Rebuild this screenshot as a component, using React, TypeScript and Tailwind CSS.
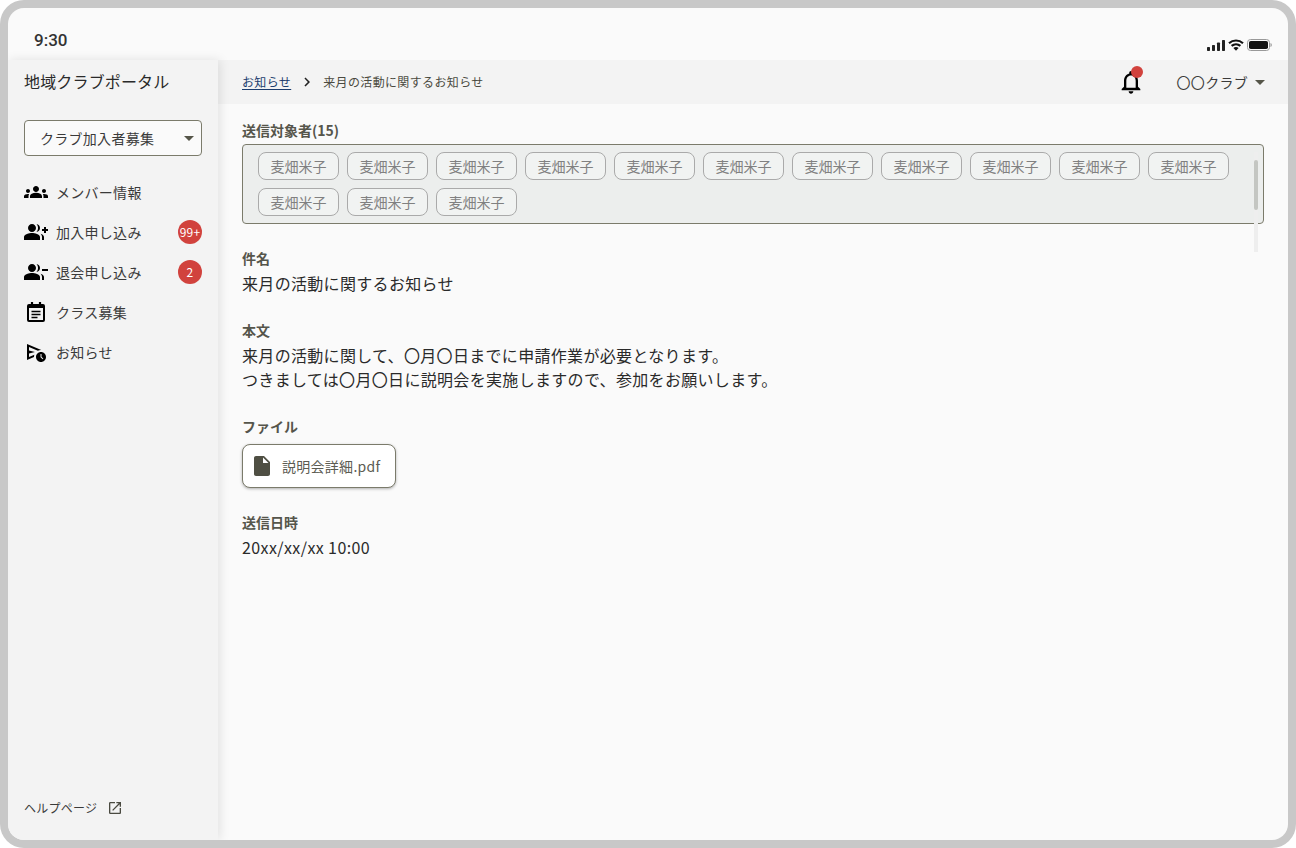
import { MdGroups, MdGroupAdd, MdGroupRemove, MdOutlineScheduleSend, MdOutlineNotifications, MdInsertDriveFile, MdOpenInNew, MdChevronRight } from "react-icons/md";

const names = Array.from({ length: 14 }, () => "麦畑米子");

function Caret({ className }: { className: string }) {
  return <span className={`w-0 h-0 border-x-[5px] border-x-transparent border-t-[5px] ${className}`} />;
}

function ClassIcon() {
  return (
    <svg width="24" height="24" viewBox="0 0 24 24" fill="none" stroke="#000" strokeWidth="2">
      <rect x="4" y="5" width="16" height="16" rx="1" />
      <path d="M8 2v4M16 2v4M4 7h16" strokeWidth="2.200" />
      <path d="M7.500 11.500h9M7.500 14.500h9M7.500 17.500h6" strokeWidth="1.600" />
    </svg>
  );
}

function StatusIcons() {
  return (
    <div className="flex items-center gap-[3px]">
      <svg width="18" height="11" viewBox="0 0 18 11" fill="#222">
        <rect x="0" y="7" width="3" height="4" rx="0.7" />
        <rect x="5" y="5" width="3" height="6" rx="0.7" />
        <rect x="10" y="2.500" width="3" height="8.500" rx="0.7" />
        <rect x="15" y="0" width="3" height="11" rx="0.7" />
      </svg>
      <svg width="16" height="12" viewBox="0 0 16 12" fill="none" stroke="#111" strokeWidth="2.200">
        <path d="M1 4.200C5 .6 11 .6 15 4.200" />
        <path d="M3.600 6.900c2.600-2.200 6.200-2.200 8.800 0" />
        <path d="M8 11.800 5.400 9c1.500-1.200 3.700-1.200 5.200 0Z" fill="#111" stroke="none" />
      </svg>
      <svg width="25" height="12" viewBox="0 0 25 12" fill="none">
        <rect x="0.5" y="0.5" width="22" height="11" rx="3" stroke="#999" />
        <rect x="2" y="2" width="19" height="8" rx="1.800" fill="#111" />
        <path d="M23.500 4v4c.8-.3 1.300-1 1.300-2s-.5-1.700-1.300-2Z" fill="#999" />
      </svg>
    </div>
  );
}

function NavItem({ icon, label, badge }: { icon: React.ReactNode; label: string; badge?: string }) {
  return (
    <div className="flex items-center h-10 px-4">
      <span className="w-6 h-6 flex items-center justify-center text-black">{icon}</span>
      <span className="ml-2 -mt-px text-sm tracking-[0.02em] text-[#3a3a3a] flex-1">{label}</span>
      {badge && (
        <span className="w-6 h-6 rounded-full bg-[#d1423d] text-white text-xs tracking-[0.02em] flex items-center justify-center">{badge}</span>
      )}
    </div>
  );
}

function Section({ label, children, className }: { label: string; children: React.ReactNode; className?: string }) {
  return (
    <div className={className}>
      <div className="text-sm font-bold text-[#55554b] leading-[20px]">{label}</div>
      {children}
    </div>
  );
}

export default function App() {
  return (
    <div className="w-[1296px] h-[848px] bg-white overflow-hidden" style={{ fontFamily: '"Noto Sans CJK JP", "Noto Sans", sans-serif' }}>
      <div className="w-full h-full bg-[#c8c8c8] rounded-[24px] p-2">
        <div className="w-full h-full bg-[#fafafa] rounded-[16px] overflow-hidden flex flex-col">
          <div className="h-[52px] shrink-0 flex items-end justify-between pl-[26px] pr-4 pb-[9px]">
            <span className="text-[17px] font-medium text-[#333333] leading-6 -mb-px" style={{ fontFamily: '"Roboto", sans-serif' }}>9:30</span>
            <StatusIcons />
          </div>

          <div className="flex flex-1 min-h-0">
            <aside className="w-[210px] shrink-0 bg-[#f3f3f3] shadow-[2px_0_10px_rgba(0,0,0,0.1)] flex flex-col z-10">
              <div className="h-11 flex items-center px-4 pb-[2px] text-base tracking-[0.01em] text-[#2a2a2a]">地域クラブポータル</div>
              <div className="mx-4 mt-4 h-9 border border-[#7b7b6b] rounded bg-[#fafafa] flex items-center justify-between pl-[15px] pr-[6px]">
                <span className="text-sm tracking-[0.02em] text-[#3a3a3a]">クラブ加入者募集</span>
                <Caret className="border-t-[#555548] mr-[1px]" />
              </div>
              <nav className="mt-4">
                <NavItem icon={<MdGroups size={24} />} label="メンバー情報" />
                <NavItem icon={<MdGroupAdd size={24} />} label="加入申し込み" badge="99+" />
                <NavItem icon={<MdGroupRemove size={24} />} label="退会申し込み" badge="2" />
                <NavItem icon={<ClassIcon />} label="クラス募集" />
                <NavItem icon={<MdOutlineScheduleSend size={24} />} label="お知らせ" />
              </nav>
              <div className="mt-auto mb-[24px] px-4 flex items-center gap-[10px]">
                <span className="text-xs tracking-[0.02em] text-[#3a3a3a]">ヘルプページ</span>
                <MdOpenInNew size={16} className="text-[#4a4a40]" />
              </div>
            </aside>

            <main className="flex-1 min-w-0 flex flex-col">
              <header className="h-11 shrink-0 bg-[#f3f3f3] flex items-center pl-6 pr-[23px]">
                <span className="text-xs tracking-[0.03em] text-[#1c3d6e] underline underline-offset-2">お知らせ</span>
                <MdChevronRight size={18} className="mx-[7px] text-[#222222]" />
                <span className="text-xs tracking-[0.03em] text-[#4a4a40]">来月の活動に関するお知らせ</span>
                <div className="relative ml-auto mr-[34px] w-6 h-6 text-black">
                  <MdOutlineNotifications size={28} className="-m-[2px]" />
                  <span className="absolute -top-[4px] left-[12px] w-3 h-3 rounded-full bg-[#d1423d]" />
                </div>
                <span className="text-sm tracking-[0.02em] text-[#3a3a3a] -mt-px">〇〇クラブ</span>
                <Caret className="border-t-[#555548] ml-[7px]" />
              </header>

              <div className="px-6 pt-4 relative">
                <Section label="送信対象者(15)">
                  <div className="mt-1 w-[1022px] h-20 bg-[#eceeed] border border-[#7b7b6b] rounded flex flex-wrap content-start gap-2 pl-[15px] pr-8 pt-[7px]">
                    {names.map((n, i) => (
                      <span key={i} className="h-7 w-[81px] border border-[#aaaaaa] rounded-lg text-sm text-[#808080] flex items-center justify-center bg-[#f1f3f2]">{n}</span>
                    ))}
                  </div>
                </Section>
                <div className="absolute left-[1036px] top-[48px] w-1 h-[100px] bg-[#eeeeee]">
                  <div className="mt-2 h-[50px] w-1 bg-[#c4c6c2] rounded-sm" />
                </div>

                <Section label="件名" className="mt-6">
                  <div className="text-base tracking-[0.02em] text-[#2a2a2a] leading-6 mt-[3px]">来月の活動に関するお知らせ</div>
                </Section>
                <Section label="本文" className="mt-[25px]">
                  <div className="text-base tracking-[0.02em] text-[#2a2a2a] leading-6 mt-[3px]">
                    来月の活動に関して、〇月〇日までに申請作業が必要となります。<br />
                    つきましては〇月〇日に説明会を実施しますので、参加をお願いします。
                  </div>
                </Section>
                <Section label="ファイル" className="mt-[25px]">
                  <div className="mt-2 w-[154px] h-11 bg-white border border-[#7b7b6b] rounded-lg shadow-[0_1px_3px_rgba(0,0,0,0.3)] flex items-center pl-[7px]">
                    <MdInsertDriveFile size={24} className="text-[#4f4f43]" />
                    <span className="ml-2 -mt-px text-sm tracking-[0.02em] text-[#5c5c52]">説明会詳細.pdf</span>
                  </div>
                </Section>
                <Section label="送信日時" className="mt-6">
                  <div className="text-base tracking-[0.025em] text-[#2a2a2a] leading-6 mt-[3px]">20xx/xx/xx 10:00</div>
                </Section>
              </div>
            </main>
          </div>
        </div>
      </div>
    </div>
  );
}
